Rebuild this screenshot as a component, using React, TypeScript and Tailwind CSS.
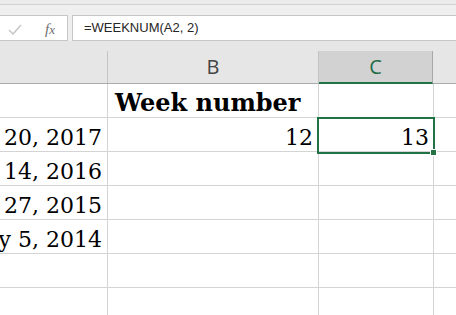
const serif = { fontFamily: '"DejaVu Serif", "Liberation Serif", serif' };

const rows = [
  { a: '', b: 'Week number', c: '' },
  { a: 'March 20, 2017', b: '12', c: '13' },
  { a: 'May 14, 2016', b: '', c: '' },
  { a: 'December 27, 2015', b: '', c: '' },
  { a: 'January 5, 2014', b: '', c: '' },
  { a: '', b: '', c: '' },
  { a: '', b: '', c: '' },
];

const Cell = ({ w, children, className = '' }: { w: string; children?: React.ReactNode; className?: string }) => (
  <div className={`${w} h-full shrink-0 overflow-hidden border-r border-[#d4d4d4] flex items-end whitespace-nowrap pb-[2px] ${className}`}>
    {children}
  </div>
);

export default function App() {
  return (
    <div className="relative h-[315px] w-[456px] overflow-hidden bg-white select-none">
      {/* ribbon edge */}
      <div className="h-[5px] bg-[#ebebeb] border-b border-[#d2d2d2]" />

      {/* formula bar */}
      <div className="bg-[#efefef] pt-[10px]">
        <div className="flex h-[26px]">
          <div className="relative w-[68px] bg-white border-y border-r border-[#c6c6c6]">
            <svg className="absolute left-[8px] top-[8px]" width="14" height="11" viewBox="0 0 14 11">
              <path d="M1 6 L5 10 L13 1" fill="none" stroke="#c8c8c8" strokeWidth="1.6" />
            </svg>
            <span
              className="absolute left-[45px] top-[2px] text-[15px] italic text-[#6e6e6e]"
              style={{ fontFamily: '"Liberation Serif", serif' }}
            >
              f<span className="text-[13px]">x</span>
            </span>
          </div>
          <div className="ml-[4px] flex-1 bg-white border-y border-l border-[#c6c6c6] flex items-center pl-[11px]">
            <span className="text-[13px] text-[#262626]" style={{ fontFamily: '"Liberation Sans", Arial, sans-serif' }}>
              =WEEKNUM(A2, 2)
            </span>
          </div>
        </div>
      </div>

      {/* column headers */}
      <div className="bg-[#e6e6e6] pt-[10px]">
        <div
          className="flex h-[33px] border-b border-[#ababab] text-[20px] text-[#444]"
          style={{ fontFamily: '"Open Sans", "Liberation Sans", sans-serif' }}
        >
          <div className="w-[108px] shrink-0 border-r border-[#c4c4c4]" />
          <div className="w-[211px] shrink-0 border-r border-[#c4c4c4] flex items-center justify-center">B</div>
          <div className="w-[114px] shrink-0 bg-[#d2d2d2] border-r border-[#a8a8a8] border-b-2 border-b-[#217346] -mb-px flex items-center justify-center text-[#1f6b45]">
            C
          </div>
          <div className="flex-1" />
        </div>
      </div>

      {/* grid */}
      <div className="text-[22px] leading-[22px] text-black" style={serif}>
        {rows.map((r, i) => (
          <div key={i} className="flex h-[34px] border-b border-[#d4d4d4]">
            <Cell w="w-[108px]" className="justify-end pr-[5px]">
              {r.a}
            </Cell>
            <Cell w="w-[211px]" className={i === 0 ? 'pl-[7px]' : 'justify-end pr-[5px]'}>
              {i === 0 ? <span className="font-bold text-[24px] leading-[24px]">{r.b}</span> : r.b}
            </Cell>
            <Cell w="w-[115px]" className="justify-end pr-[4px]">
              {r.c}
            </Cell>
            <div className="flex-1" />
          </div>
        ))}
      </div>

      {/* selection */}
      <div className="pointer-events-none absolute left-[317px] top-[117px] h-[37px] w-[118px] border-2 border-[#217346]" />
      <div className="pointer-events-none absolute left-[430px] top-[149px] h-[7px] w-[7px] bg-[#217346] border border-white" />
    </div>
  );
}
